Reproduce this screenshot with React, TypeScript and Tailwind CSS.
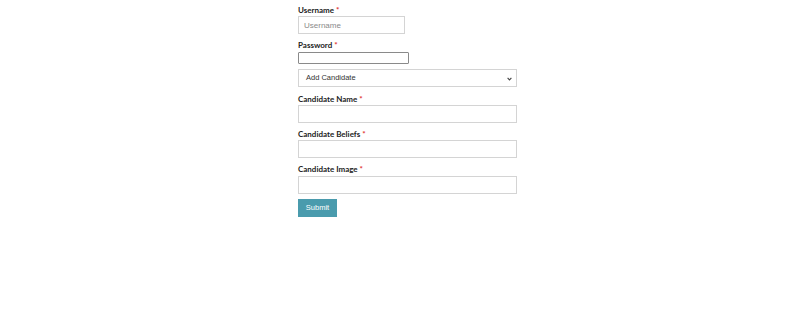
import React from "react";

const Label = ({ text, className = "" }: { text: string; className?: string }) => (
  <label className={`block h-[12px] text-[8px] leading-[12px] font-bold text-[#222] ${className}`}>
    <span className="font-['Lato','Noto_Sans',sans-serif]">{text}</span>{" "}
    <span className="text-[#e03131]">*</span>
  </label>
);

export default function App() {
  return (
    <div className="w-[806px] h-[335px] bg-white font-['Lato',sans-serif]">
      <div className="pl-[298px] pt-[4px] flex flex-col items-start">
        <Label text="Username" />
        <input
          placeholder="Username"
          className="mt-0 w-[107px] h-[18px] border border-[#d4d4d4] px-[5px] text-[8px] font-['Liberation_Sans',sans-serif] placeholder:text-[#8a8a8a] outline-none"
        />
        <Label text="Password" className="mt-[5px]" />
        <input
          type="password"
          className="mt-[1px] w-[111px] h-[12px] border border-[#8a8a8a] rounded-[1px] outline-none"
        />
        <div className="relative mt-[5px] w-[219px] h-[18px] border border-[#d4d4d4] flex items-center pl-[7px] text-[7.5px] text-[#333] font-['Liberation_Sans',sans-serif]">
          Add Candidate
          <svg
            className="absolute right-[4px] top-[7px]"
            width="5"
            height="4"
            viewBox="0 0 5 4"
            fill="none"
            stroke="#444"
            strokeWidth="1.1"
          >
            <path d="M0.6 0.8 L2.5 2.9 L4.4 0.8" />
          </svg>
        </div>
        <Label text="Candidate Name" className="mt-[6px]" />
        <input className="mt-0 w-[219px] h-[18px] border border-[#d4d4d4] outline-none" />
        <Label text="Candidate Beliefs" className="mt-[5px]" />
        <input className="mt-0 w-[219px] h-[18px] border border-[#d4d4d4] outline-none" />
        <Label text="Candidate Image" className="mt-[5px]" />
        <input className="mt-[1px] w-[219px] h-[18px] border border-[#d4d4d4] outline-none" />
        <button className="mt-[5px] w-[39px] h-[18px] bg-[#4a9bad] text-white text-[7.5px] font-['Liberation_Sans',sans-serif]">
          Submit
        </button>
      </div>
    </div>
  );
}
